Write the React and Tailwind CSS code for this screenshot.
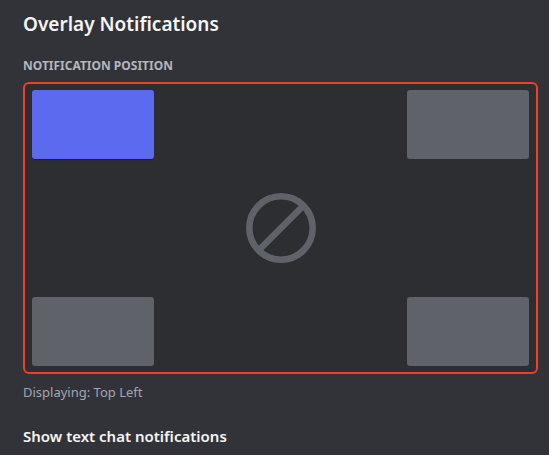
import { useState } from "react";

function Corner({ value, label, selected, onSelect }) {
  return (
    <input
      type="radio"
      name="notification-position"
      value={value}
      aria-label={label}
      checked={selected === value}
      onChange={() => onSelect(value)}
      className="m-0 h-[69px] w-[122px] shrink-0 cursor-pointer appearance-none rounded-[3px] bg-[#5f6268] checked:bg-[#5c6af0] checked:shadow-[0_1px_1px_#1e1f22]"
    />
  );
}

const names = {
  "top-left": "Top Left",
  "top-right": "Top Right",
  "bottom-left": "Bottom Left",
  "bottom-right": "Bottom Right",
  disabled: "Disabled",
};

export default function App() {
  const [position, setPosition] = useState("top-left");

  return (
    <main className="min-h-screen bg-[#323338] pr-[11px] pl-[23px] pt-[10px] font-['Noto_Sans',sans-serif]">
      <h1 className="text-[19px] leading-7 font-semibold text-[#f4f5f7]">Overlay Notifications</h1>

      <h2 id="position-title" className="mt-5 text-[12px] leading-4 font-bold text-[#b3b7bf] uppercase">
        Notification Position
      </h2>

      <div
        role="radiogroup"
        aria-labelledby="position-title"
        className="mt-2 flex flex-col rounded-[6px] border-2 border-[#ef3f26] bg-[#2d2e32] px-[7px] py-1.5"
      >
        <div className="flex justify-between">
          <Corner value="top-left" label="Top Left" selected={position} onSelect={setPosition} />
          <Corner value="top-right" label="Top Right" selected={position} onSelect={setPosition} />
        </div>
        <div className="flex justify-center py-[34px]">
          <label className="relative block cursor-pointer text-[#5f6268]">
            <input
              type="radio"
              name="notification-position"
              value="disabled"
              aria-label="Disabled"
              checked={position === "disabled"}
              onChange={() => setPosition("disabled")}
              className="peer sr-only"
            />
            <svg
              viewBox="0 0 70 70"
              fill="none"
              stroke="currentColor"
              strokeWidth="6.6"
              aria-hidden="true"
              className="size-[70px] peer-checked:text-[#f23f43]"
            >
              <circle cx="35" cy="35" r="31.7" />
              <path d="M12.5 57.5 57.5 12.5" />
            </svg>
          </label>
        </div>
        <div className="flex justify-between">
          <Corner value="bottom-left" label="Bottom Left" selected={position} onSelect={setPosition} />
          <Corner value="bottom-right" label="Bottom Right" selected={position} onSelect={setPosition} />
        </div>
      </div>

      <p className="mt-2 text-[13px] leading-5 text-[#a3a6ae]">Displaying: {names[position]}</p>

      <h3 className="mt-6 text-[15px] leading-5 font-semibold text-[#f4f5f7]">Show text chat notifications</h3>
    </main>
  );
}
